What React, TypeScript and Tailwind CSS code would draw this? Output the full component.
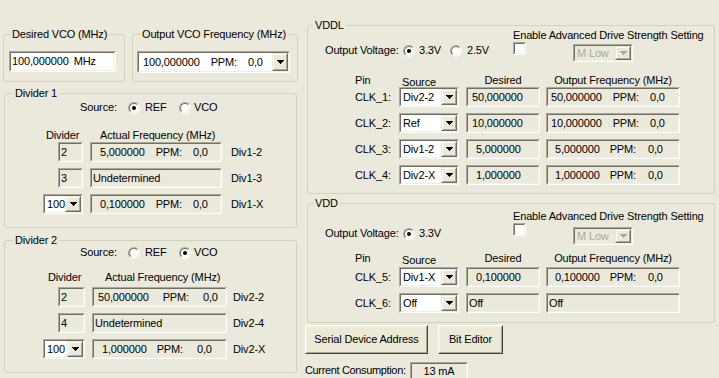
import type { ReactNode } from "react";

type Kids = { className?: string; inner?: string; children?: ReactNode };

// classic 3D sunken edge (text boxes, static fields, combos)
function Sunk({ className = "", inner = "", children }: Kids) {
  return (
    <div className={`border border-t-[#aca899] border-l-[#aca899] border-b-white border-r-white ${className}`}>
      <div
        className={`flex h-full w-full items-center overflow-hidden whitespace-pre border border-t-[#716f64] border-l-[#716f64] border-b-[#f1efe2] border-r-[#f1efe2] ${inner}`}
      >
        {children}
      </div>
    </div>
  );
}

function Arrow({ disabled = false }: { disabled?: boolean }) {
  return (
    <svg width="7" height="4" viewBox="0 0 7 4" shapeRendering="crispEdges">
      <path
        d="M0 0h7v1h-1v1h-1v1h-1v1h-1v-1h-1v-1h-1v-1h-1z"
        className={disabled ? "fill-[#aca899]" : "fill-black"}
      />
    </svg>
  );
}

function DropBtn({ disabled = false }: { disabled?: boolean }) {
  return (
    <div className="h-full w-[16px] shrink-0 border border-t-[#ece9d8] border-l-[#ece9d8] border-b-[#716f64] border-r-[#716f64]">
      <div className="flex h-full w-full items-center justify-center border border-t-white border-l-white border-b-[#aca899] border-r-[#aca899] bg-[#ece9d8]">
        <Arrow disabled={disabled} />
      </div>
    </div>
  );
}

function Combo({ className = "", children, disabled = false }: Kids & { disabled?: boolean }) {
  return (
    <Sunk className={className} inner={disabled ? "bg-[#ebe9dc] text-[#aca899]" : "bg-white"}>
      <div className="flex flex-1 items-center pl-[2px]">{children}</div>
      <DropBtn disabled={disabled} />
    </Sunk>
  );
}

function Radio({ on = false }: { on?: boolean }) {
  return (
    <span className="inline-flex h-[12px] w-[12px] shrink-0 rounded-full border border-t-[#aca899] border-l-[#aca899] border-b-white border-r-white">
      <span className="flex h-full w-full items-center justify-center rounded-full border border-t-[#716f64] border-l-[#716f64] border-b-[#f1efe2] border-r-[#f1efe2] bg-white">
        {on && <span className="h-[4px] w-[4px] rounded-full bg-black" />}
      </span>
    </span>
  );
}

function Button({ className = "", children }: Kids) {
  return (
    <div className={`border border-t-white border-l-white border-b-[#404040] border-r-[#404040] ${className}`}>
      <div className="flex h-full w-full items-center justify-center border border-t-[#f1efe2] border-l-[#f1efe2] border-b-[#aca899] border-r-[#aca899] bg-[#ece9d8]">
        {children}
      </div>
    </div>
  );
}

function Group({ title, className = "", legend = "", children }: Kids & { title: string; legend?: string }) {
  return (
    <fieldset className={`rounded-[3px] border border-[#d0d0bf] ${className}`}>
      <legend className={`px-[2px] leading-[11px] ${legend}`}>{title}</legend>
      {children}
    </fieldset>
  );
}

function Ppm({ num, a, b, c }: { num: string; a: string; b: string; c: string }) {
  return (
    <>
      <span className={a}>{num}</span>
      <span className={b}>PPM:</span>
      <span className={c}>0,0</span>
    </>
  );
}

function Divider({ n, source, rows }: { n: 1 | 2; source: "REF" | "VCO"; rows: { div: string; freq: ReactNode; name: string; combo?: boolean }[] }) {
  const one = n === 1;
  return (
    <Group
      title={`Divider ${n}`}
      className={one ? "ml-[1px] mt-[6px] h-[140px] w-[293px]" : "ml-[1px] mt-[7px] h-[138px] w-[293px]"}
      legend="ml-[8px]"
    >
      <div className={`flex h-[13px] items-center pl-[75px] ${one ? "mt-[2px]" : "mt-0"}`}>
        <span className="w-[48px]">Source:</span>
        <Radio on={source === "REF"} />
        <span className="ml-[5px] w-[34px]">REF</span>
        <Radio on={source === "VCO"} />
        <span className="ml-[3px]">VCO</span>
      </div>
      <div className={`flex h-[13px] items-center ${one ? "mt-[15px] pl-[41px]" : "mt-[12px] pl-[43px]"}`}>
        <span className={one ? "w-[54px]" : "w-[57px]"}>Divider</span>
        <span>Actual Frequency (MHz)</span>
      </div>
      <div className={`flex flex-col gap-[6px] ${one ? "mt-0" : "mt-[3px]"}`}>
        {rows.map((r) => (
          <div key={r.name} className="flex h-[20px] items-center">
            <div className={`flex h-full justify-end ${one ? "w-[78px]" : "w-[80px]"}`}>
              {r.combo ? (
                <Combo className={`h-full ${one ? "w-[40px]" : "w-[42px]"}`}>{r.div}</Combo>
              ) : (
                <Sunk className={`h-full ${one ? "w-[25px]" : "w-[27px]"}`} inner="pl-[1px]">
                  {r.div}
                </Sunk>
              )}
            </div>
            <Sunk className={`ml-[7px] h-full ${one ? "w-[132px]" : "w-[135px]"}`} inner="pl-[1px]">
              {r.freq}
            </Sunk>
            <span className={one ? "ml-[9px]" : "ml-[6px]"}>{r.name}</span>
          </div>
        ))}
      </div>
    </Group>
  );
}

type ClkRow = { clk: string; src: string; desired: string; dPad: string; out: ReactNode };

function ClkTable({ rows, headTop, rowTop }: { rows: ClkRow[]; headTop: string; rowTop: string }) {
  return (
    <>
      <div className={`flex h-[13px] items-start pl-[47px] ${headTop}`}>
        <span className="w-[44px]">Pin</span>
        <span className="mt-[2px] w-[60px] pl-[3px]">Source</span>
        <span className="ml-[7px] w-[74px] text-center">Desired</span>
        <span className="ml-[6px] w-[134px] text-center">Output Frequency (MHz)</span>
      </div>
      <div className={`flex flex-col gap-[6px] ${rowTop}`}>
        {rows.map((r) => (
          <div key={r.clk} className="flex h-[20px] items-center pl-[47px]">
            <span className="w-[44px]">{r.clk}</span>
            <Combo className="h-full w-[60px]">{r.src}</Combo>
            <Sunk className="ml-[7px] h-full w-[74px]" inner={r.dPad}>
              {r.desired}
            </Sunk>
            <Sunk className="ml-[6px] h-full w-[134px]" inner="pl-[1px]">
              {r.out}
            </Sunk>
          </div>
        ))}
      </div>
    </>
  );
}

function DriveStrength({ comboTop }: { comboTop: string }) {
  return (
    <div>
      <div className="whitespace-nowrap">Enable Advanced Drive Strength Setting</div>
      <div className="flex items-start">
        <Sunk className="h-[13px] w-[13px]" inner="bg-white" />
        <Combo disabled className={`ml-[47px] h-[18px] w-[60px] ${comboTop}`}>
          M Low
        </Combo>
      </div>
    </div>
  );
}

export default function App() {
  const outA = (num: string) => <Ppm num={num} a="ml-[2px]" b="ml-[11px]" c="ml-[11px]" />;
  const outB = (num: string) => <Ppm num={num} a="ml-[6px]" b="ml-[10px]" c="ml-[12px]" />;

  return (
    <div className="flex h-[378px] w-[719px] items-start overflow-hidden bg-[#ebe9dc] font-['Liberation_Sans',Arial,sans-serif] text-[11px] leading-[13px] tracking-[-0.15px] text-black">
      {/* left column */}
      <div className="ml-[3px] flex w-[295px] flex-col">
        <div className="mt-[29px] flex gap-[7px]">
          <Group title="Desired VCO (MHz)" className="h-[53px] w-[122px]" legend="ml-[6px]">
            <div className="ml-[5px] mt-[11px]">
              <Sunk className="h-[21px] w-[107px]" inner="bg-white pl-[1px]">
                <span>100,000000</span>
                <span className="ml-[5px]">MHz</span>
              </Sunk>
            </div>
          </Group>
          <Group title="Output VCO Frequency (MHz)" className="h-[53px] w-[166px]" legend="ml-[7px]">
            <div className="ml-[4px] mt-[11px]">
              <Combo className="h-[22px] w-[153px]">
                <Ppm num="100,000000" a="ml-[2px]" b="ml-[11px]" c="ml-[11px]" />
              </Combo>
            </div>
          </Group>
        </div>

        <Divider
          n={1}
          source="REF"
          rows={[
            { div: "2", name: "Div1-2", freq: <Ppm num="5,000000" a="ml-[7px]" b="ml-[11px]" c="ml-[11px]" /> },
            { div: "3", name: "Div1-3", freq: "Undetermined" },
            { div: "100", name: "Div1-X", combo: true, freq: <Ppm num="0,100000" a="ml-[7px]" b="ml-[11px]" c="ml-[11px]" /> },
          ]}
        />
        <Divider
          n={2}
          source="VCO"
          rows={[
            { div: "2", name: "Div2-2", freq: <Ppm num="50,000000" a="ml-[3px]" b="ml-[14px]" c="ml-[14px]" /> },
            { div: "4", name: "Div2-4", freq: "Undetermined" },
            { div: "100", name: "Div2-X", combo: true, freq: <Ppm num="1,000000" a="ml-[7px]" b="ml-[10px]" c="ml-[14px]" /> },
          ]}
        />
      </div>

      {/* right column */}
      <div className="ml-[7px] flex w-[410px] flex-col">
        <Group title="VDDL" className="ml-[2px] mt-[20px] h-[174px] w-[408px]" legend="ml-[5px]">
          <div className="flex h-[32px]">
            <div className="flex w-[205px] items-center self-start pl-[17px] pt-[13px]">
              <span className="w-[78px]">Output Voltage:</span>
              <Radio on />
              <span className="ml-[4px] w-[31px]">3.3V</span>
              <Radio />
              <span className="ml-[5px]">2.5V</span>
            </div>
            <div className="-mt-[2px]">
              <DriveStrength comboTop="mt-[2px]" />
            </div>
          </div>
          <ClkTable
            headTop="mt-[11px]"
            rowTop="mt-0"
            rows={[
              { clk: "CLK_1:", src: "Div2-2", desired: "50,000000", dPad: "pl-[4px]", out: outA("50,000000") },
              { clk: "CLK_2:", src: "Ref", desired: "10,000000", dPad: "pl-[4px]", out: outA("10,000000") },
              { clk: "CLK_3:", src: "Div1-2", desired: "5,000000", dPad: "pl-[8px]", out: outB("5,000000") },
              { clk: "CLK_4:", src: "Div2-X", desired: "1,000000", dPad: "pl-[8px]", out: outB("1,000000") },
            ]}
          />
        </Group>

        <Group title="VDD" className="ml-[2px] mt-[4px] h-[125px] w-[408px]" legend="ml-[5px]">
          <div className="flex h-[36px]">
            <div className="flex w-[205px] items-center self-start pl-[17px] pt-[18px]">
              <span className="w-[78px]">Output Voltage:</span>
              <Radio on />
              <span className="ml-[4px]">3.3V</span>
            </div>
            <div className="mt-[1px]">
              <DriveStrength comboTop="mt-[4px]" />
            </div>
          </div>
          <ClkTable
            headTop="mt-[7px]"
            rowTop="mt-[2px]"
            rows={[
              { clk: "CLK_5:", src: "Div1-X", desired: "0,100000", dPad: "pl-[8px]", out: outB("0,100000") },
              { clk: "CLK_6:", src: "Off", desired: "Off", dPad: "pl-[1px]", out: "Off" },
            ]}
          />
        </Group>

        <div className="mt-[2px] flex gap-[10px]">
          <Button className="h-[29px] w-[123px]">Serial Device Address</Button>
          <Button className="h-[29px] w-[65px]">Bit Editor</Button>
        </div>

        <div className="mt-[8px] flex items-start">
          <span className="mt-[2px] w-[105px] whitespace-nowrap tracking-[-0.35px]">Current Consumption:</span>
          <Sunk className="h-[19px] w-[58px]" inner="justify-center">
            13 mA
          </Sunk>
        </div>
      </div>
    </div>
  );
}
